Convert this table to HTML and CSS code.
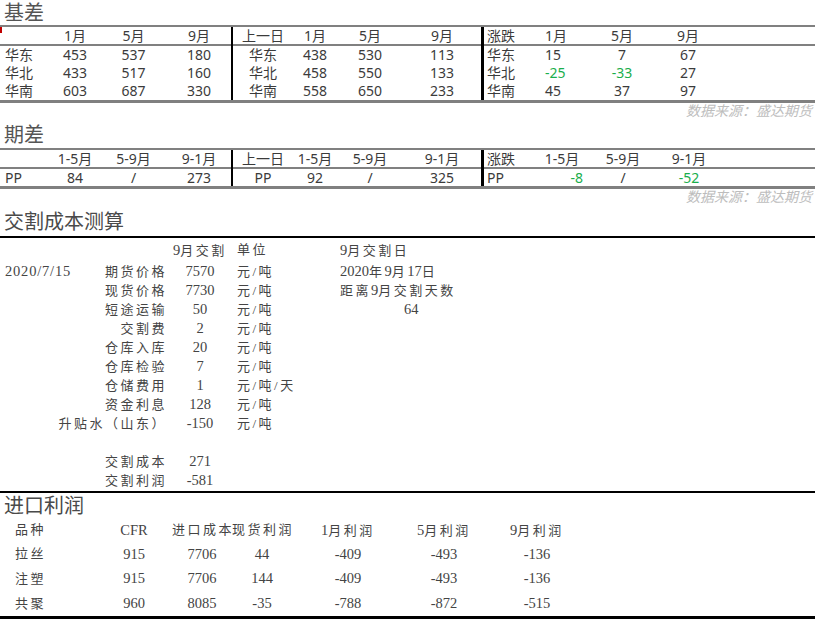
FILE: index.html
```html
<!DOCTYPE html>
<html lang="zh-CN">
<head>
<meta charset="utf-8">
<title>基差 期差 交割成本测算 进口利润</title>
<link rel="stylesheet" href="styles.css">
</head>
<body>
<div class="title t1h">基差</div>
<div class="tbl t1">
  <div class="grp g-left">
    <div class="hrow r-left"><div class="lbl mark"></div><div>1月</div><div>5月</div><div>9月</div></div>
    <div class="row r-left"><div class="lbl">华东</div><div>453</div><div>537</div><div>180</div></div>
    <div class="row r-left"><div class="lbl">华北</div><div>433</div><div>517</div><div>160</div></div>
    <div class="row r-left"><div class="lbl">华南</div><div>603</div><div>687</div><div>330</div></div>
  </div>
  <div class="grp g-mid">
    <div class="hrow r-mid"><div>上一日</div><div>1月</div><div>5月</div><div>9月</div></div>
    <div class="row r-mid"><div>华东</div><div>438</div><div>530</div><div>113</div></div>
    <div class="row r-mid"><div>华北</div><div>458</div><div>550</div><div>133</div></div>
    <div class="row r-mid"><div>华南</div><div>558</div><div>650</div><div>233</div></div>
  </div>
  <div class="grp g-right">
    <div class="hrow r-right1"><div class="lbl2">涨跌</div><div class="la">1月</div><div>5月</div><div>9月</div></div>
    <div class="row r-right1"><div class="lbl2">华东</div><div class="la">15</div><div>7</div><div>67</div></div>
    <div class="row r-right1"><div class="lbl2">华北</div><div class="la neg">-25</div><div class="neg">-33</div><div>27</div></div>
    <div class="row r-right1"><div class="lbl2">华南</div><div class="la">45</div><div>37</div><div>97</div></div>
  </div>
</div>
<div class="src">数据来源：盛达期货</div>

<div class="title t2h">期差</div>
<div class="tbl t2">
  <div class="grp g-left">
    <div class="hrow r-left"><div class="lbl"></div><div>1-5月</div><div>5-9月</div><div>9-1月</div></div>
    <div class="row r-left"><div class="lbl">PP</div><div>84</div><div>/</div><div>273</div></div>
  </div>
  <div class="grp g-mid">
    <div class="hrow r-mid"><div>上一日</div><div>1-5月</div><div>5-9月</div><div>9-1月</div></div>
    <div class="row r-mid"><div>PP</div><div>92</div><div>/</div><div>325</div></div>
  </div>
  <div class="grp g-right">
    <div class="hrow r-right2"><div class="lbl2">涨跌</div><div>1-5月</div><div>5-9月</div><div>9-1月</div></div>
    <div class="row r-right2"><div class="lbl2">PP</div><div class="ra neg">-8</div><div>/</div><div class="neg">-52</div></div>
  </div>
</div>
<div class="src">数据来源：盛达期货</div>

<div class="title t3h">交割成本测算</div>
<div class="calc">
  <div class="crow chead"><div></div><div></div><div class="v">9<span class="zh">月交割</span></div><div class="u zh">单位</div><div class="side">9<span class="zh">月交割日</span></div></div>
  <div class="crow"><div class="date">2020/7/15</div><div class="k zh">期货价格</div><div class="v">7570</div><div class="u"><span class="zh">元/吨</span></div><div class="side">2020<span class="zh">年</span>9<span class="zh">月</span>17<span class="zh">日</span></div></div>
  <div class="crow"><div></div><div class="k zh">现货价格</div><div class="v">7730</div><div class="u"><span class="zh">元/吨</span></div><div class="side"><span class="zh">距离</span>9<span class="zh">月交割天数</span></div></div>
  <div class="crow"><div></div><div class="k zh">短途运输</div><div class="v">50</div><div class="u"><span class="zh">元/吨</span></div><div class="side days">64</div></div>
  <div class="crow"><div></div><div class="k zh">交割费</div><div class="v">2</div><div class="u"><span class="zh">元/吨</span></div></div>
  <div class="crow"><div></div><div class="k zh">仓库入库</div><div class="v">20</div><div class="u"><span class="zh">元/吨</span></div></div>
  <div class="crow"><div></div><div class="k zh">仓库检验</div><div class="v">7</div><div class="u"><span class="zh">元/吨</span></div></div>
  <div class="crow"><div></div><div class="k zh">仓储费用</div><div class="v">1</div><div class="u"><span class="zh">元/吨/天</span></div></div>
  <div class="crow"><div></div><div class="k zh">资金利息</div><div class="v">128</div><div class="u"><span class="zh">元/吨</span></div></div>
  <div class="crow"><div></div><div class="k zh">升贴水（山东）</div><div class="v">-150</div><div class="u"><span class="zh">元/吨</span></div></div>
  <div class="crow"></div>
  <div class="crow"><div></div><div class="k zh">交割成本</div><div class="v">271</div></div>
  <div class="crow"><div></div><div class="k zh">交割利润</div><div class="v">-581</div></div>
</div>

<div class="title t4h">进口利润</div>
<div class="imp">
  <div class="irow ih"><div class="first zh">品种</div><div>CFR</div><div class="zh">进口成本</div><div class="zh">现货利润</div><div>1<span class="zh">月利润</span></div><div>5<span class="zh">月利润</span></div><div>9<span class="zh">月利润</span></div></div>
  <div class="irow ir1"><div class="first zh">拉丝</div><div>915</div><div>7706</div><div>44</div><div>-409</div><div>-493</div><div>-136</div></div>
  <div class="irow ir2"><div class="first zh">注塑</div><div>915</div><div>7706</div><div>144</div><div>-409</div><div>-493</div><div>-136</div></div>
  <div class="irow ir2"><div class="first zh">共聚</div><div>960</div><div>8085</div><div>-35</div><div>-788</div><div>-872</div><div>-515</div></div>
</div>
</body>
</html>
```

FILE: styles.css
```css
html, body {
  margin: 0;
  padding: 0;
  background: #ffffff;
}

body {
  width: 815px;
  height: 619px;
  overflow: hidden;
  font-family: "Noto Sans", "Noto Sans CJK SC", sans-serif;
  color: #3b3b3b;
}

/* section titles */
.title {
  font-family: "Noto Sans CJK SC", sans-serif;
  font-size: 20px;
  color: #555555;
  padding-left: 4px;
  white-space: nowrap;
}
.t1h { height: 25px; line-height: 24px; }
.t2h { height: 25px; line-height: 21px; }
.t3h { height: 27px; line-height: 23px; border-bottom: 2px solid #000; color: #4a4a4a; }
.t4h { height: 25px; line-height: 24px; border-top: 2px solid #000; color: #4a4a4a; }

/* top tables */
.tbl {
  display: flex;
  border-top: 2px solid #808080;
  border-bottom: 3px solid #808080;
  font-size: 14px;
}
.grp {
  display: flex;
  flex-direction: column;
}
.g-left { width: 231px; border-right: 2px solid #000; }
.g-mid { width: 248px; border-right: 3px solid #000; }
.g-right { flex: 1; }

.hrow, .row {
  display: grid;
  text-align: center;
  white-space: nowrap;
}
.hrow {
  height: 17px;
  line-height: 17px;
  border-bottom: 2px solid #808080;
}
.t1 .row { height: 18px; line-height: 18px; }
.t2 .row { height: 17px; line-height: 17px; }

.r-left { grid-template-columns: 50px 50px 67px 64px; }
.r-mid { grid-template-columns: 60px 44px 66px 78px; }
.r-right1 { grid-template-columns: 46px 48px 88px 44px 1fr; }
.r-right2 { grid-template-columns: 46px 64px 58px 74px 1fr; }

.lbl { text-align: left; padding-left: 5px; }
.lbl2 { text-align: left; padding-left: 3px; }
.la { text-align: left; padding-left: 15px; }
.ra { text-align: right; padding-right: 11px; }
.neg { color: #1aae4c; }

.mark { position: relative; }
.mark::before {
  content: "";
  position: absolute;
  left: 0;
  top: 0;
  width: 2px;
  height: 6px;
  background: #c00000;
}

/* source line */
.src {
  height: 20px;
  line-height: 15px;
  text-align: right;
  padding-right: 3px;
  font-family: "Noto Sans CJK SC", sans-serif;
  font-size: 14px;
  font-style: italic;
  color: #bdbdbd;
  white-space: nowrap;
}

/* serif sheets */
.calc, .imp {
  font-family: "Liberation Serif", "Noto Sans CJK SC", serif;
  font-size: 14.5px;
  color: #444444;
}
.zh {
  font-size: 13px;
  letter-spacing: 2.5px;
}

.calc { padding-bottom: 1px; }
.crow {
  display: grid;
  grid-template-columns: 50px 117px 63px 110px 1fr;
  height: 19px;
  line-height: 19px;
  white-space: nowrap;
}
.crow.chead { height: 24px; line-height: 24px; }
.date { padding-left: 5px; letter-spacing: 0.8px; }
.k { text-align: right; }
.v { text-align: center; padding-left: 3px; }
.u { padding-left: 7px; }
.side { padding-left: 0; }
.days { padding-left: 64px; }

.imp { border-bottom: 3px solid #000; }
.irow {
  display: grid;
  grid-template-columns: 96px 76px 60px 60px 112px 80px 106px 1fr;
  text-align: center;
  white-space: nowrap;
}
.ih, .ir1 { height: 24px; line-height: 24px; }
.ir2 { height: 25px; line-height: 25px; }
.first { text-align: left; padding-left: 15px; }
```
